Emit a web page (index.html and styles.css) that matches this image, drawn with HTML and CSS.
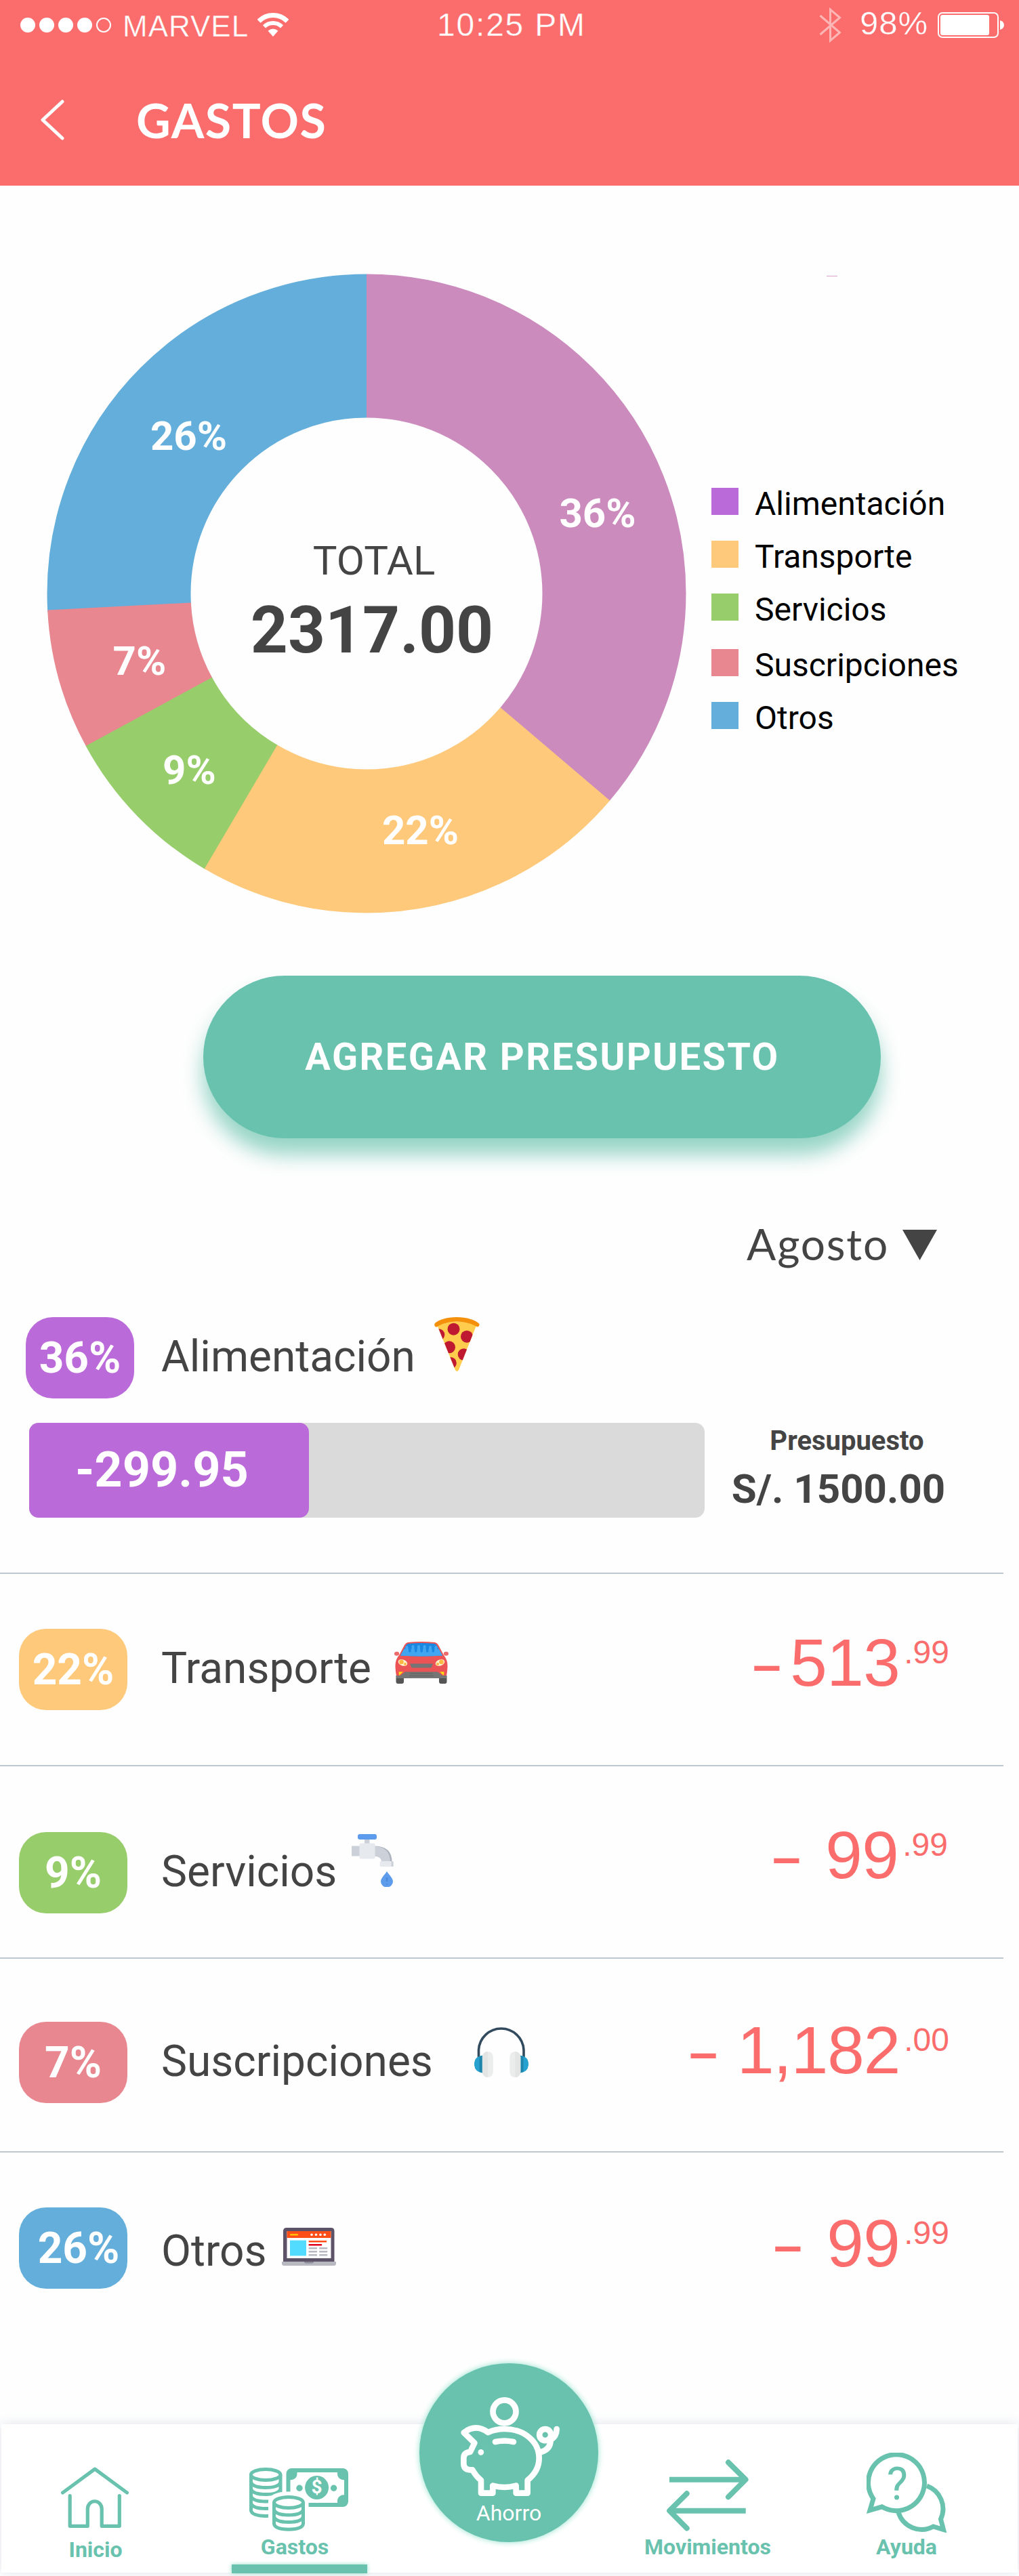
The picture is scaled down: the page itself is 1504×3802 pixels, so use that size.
FILE: index.html
```html
<!DOCTYPE html>
<html lang="es">
<head>
<meta charset="utf-8">
<title>Gastos</title>
<link rel="stylesheet" href="styles.css">
</head>
<body>
<header class="header">
  <div class="status">
    <div class="status-left">
      <span class="dots"><i></i><i></i><i></i><i></i><i class="hollow"></i></span>
      <span class="carrier">MARVEL</span>
      <svg class="wifi" width="46" height="36" viewBox="0 0 46 36">
        <g fill="none" stroke="#fff">
          <path d="M2 13.2A29.5 29.5 0 0 1 44 13.2" stroke-width="7"/>
          <path d="M10 21.4A18.5 18.5 0 0 1 36 21.4" stroke-width="6"/>
        </g>
        <path d="M23 36L15.5 27.5Q23 21.5 30.5 27.5Z" fill="#fff"/>
      </svg>
    </div>
    <span class="clock">10:25 PM</span>
    <div class="status-right">
      <svg class="bluetooth" width="33" height="54" viewBox="0 0 33 54">
        <path d="M1.5 13L30.5 38L16.5 50V4L30.5 16L1.5 41" fill="none" stroke="#fff" stroke-width="3"/>
      </svg>
      <span class="percent">98%</span>
      <svg class="battery" width="98" height="38" viewBox="0 0 98 38">
        <rect x="1" y="1" width="88" height="36" rx="6" fill="none" stroke="#fff" stroke-width="2"/>
        <rect x="4" y="4" width="72" height="30" rx="3" fill="#fff"/>
        <path d="M92 12Q98 14 98 19T92 26Z" fill="#fff"/>
      </svg>
    </div>
  </div>
  <div class="titlebar">
    <svg class="back" width="36" height="60" viewBox="0 0 36 60">
      <path d="M32 3L3 30L32 57" fill="none" stroke="#fff" stroke-width="5" stroke-linecap="round" stroke-linejoin="round"/>
    </svg>
    <h1>GASTOS</h1>
  </div>
</header>

<section class="summary">
  <svg class="donut" width="944" height="944" viewBox="-472 -472 944 944">
    <g fill="none" stroke-width="212" transform="rotate(-90)">
      <circle class="seg-otros" r="365.5" pathLength="360" stroke-dasharray="93.5 360" stroke-dashoffset="-266.7"/>
      <circle class="seg-suscripciones" r="365.5" pathLength="360" stroke-dasharray="25.7 360" stroke-dashoffset="-241.3"/>
      <circle class="seg-servicios" r="365.5" pathLength="360" stroke-dasharray="31.2 360" stroke-dashoffset="-210.3"/>
      <circle class="seg-transporte" r="365.5" pathLength="360" stroke-dasharray="80.2 360" stroke-dashoffset="-130.3"/>
      <circle class="seg-alimentacion" r="365.5" pathLength="360" stroke-dasharray="130.4 360"/>
    </g>
    <g class="share">
      <text x="341" y="-98">36%</text>
      <text x="-262.500" y="-212">26%</text>
      <text x="-335" y="120">7%</text>
      <text x="-261.500" y="281">9%</text>
      <text x="79.500" y="370">22%</text>
    </g>
    <text class="total-label" x="11" y="-28">TOTAL</text>
    <text class="total-value" x="8" y="86.500">2317.00</text>
  </svg>
  <div class="legend-side">
    <span class="tick"></span>
    <ul class="legend">
      <li><i class="bg-alimentacion"></i>Alimentación</li>
      <li><i class="bg-transporte"></i>Transporte</li>
      <li><i class="bg-servicios"></i>Servicios</li>
      <li class="wide-gap"><i class="bg-suscripciones"></i>Suscripciones</li>
      <li><i class="bg-otros"></i>Otros</li>
    </ul>
  </div>
</section>

<button class="add">AGREGAR PRESUPUESTO</button>

<div class="month">
  <span>Agosto</span>
  <svg width="51" height="45" viewBox="0 0 51 45"><path d="M0 0H51L25.500 45Z" fill="#444"/></svg>
</div>

<main class="list">
  <section class="row row-alimentacion">
    <div class="line">
      <span class="pill bg-alimentacion">36%</span>
      <span class="name">Alimentación</span>
      <svg class="icon" width="67" height="80" viewBox="0 0 67 80">
        <clipPath id="slice"><path d="M3.500 10Q33 3 63 10L36 78Q33.500 82 31 78Z"/></clipPath>
        <g clip-path="url(#slice)">
          <rect width="67" height="80" fill="#ffcc4d"/>
          <g fill="#be1931"><circle cx="28.500" cy="17.700" r="9"/><circle cx="48" cy="28.700" r="9"/><circle cx="6.500" cy="26" r="8.800"/><circle cx="22" cy="44.300" r="9"/><circle cx="43.500" cy="55" r="8.800"/><circle cx="24" cy="67.700" r="8.800"/></g>
        </g>
        <path d="M33 0C18 0 6 4 1 9Q-1 12 2 14.500Q4 15 6 13Q17 6.500 33 6.500T61 13Q63 15 65 14Q68 11 65.500 9C60 4 48 0 33 0Z" fill="#f4900c"/>
      </svg>
    </div>
    <div class="budget">
      <div class="track"><div class="fill">-299.95</div></div>
      <div class="limit"><span class="limit-label">Presupuesto</span><span class="limit-value">S/. 1500.00</span></div>
    </div>
  </section>

  <section class="row row-transporte">
    <span class="pill bg-transporte">22%</span>
    <span class="name">Transporte</span>
    <svg class="icon" width="80" height="62" viewBox="0 0 80 62">
      <path d="M2.500 50H14V59Q14 62 11 62H5.500Q2.500 62 2.500 59ZM66 50H77.500V59Q77.500 62 74.500 62H69Q66 62 66 59Z" fill="#555"/>
      <path d="M20 1Q40-1 60 1Q63 1.500 65 5L73 20Q79 27 78.500 37Q78 46 77 50H3Q2 46 1.500 37Q1 27 7 20L15 5Q17 1.500 20 1Z" fill="#ec5355"/>
      <ellipse cx="3.600" cy="17.800" rx="3.600" ry="3" fill="#ec6a6c"/><ellipse cx="76.400" cy="17.800" rx="3.600" ry="3" fill="#ec6a6c"/>
      <path d="M20.500 3Q40 1 59.500 3Q62 3.500 63 6L71 20.500Q40 22.500 9 20.500L17 6Q18 3.500 20.500 3Z" fill="#1a87e0"/>
      <path d="M9 20.500L14 11H66L71 20.500Q40 22.500 9 20.500Z" fill="#42a5f0"/>
      <path d="M18.500 8V14M27.500 7V14M36 7V14M44.500 7V14M53 8V14M61.500 8V14" stroke="#42a5f0" stroke-width="4" stroke-linecap="round"/>
      <path d="M22.800 9V14M31.700 9V14M40.200 9V14M48.700 9V14M57.300 9V14" stroke="#1a87e0" stroke-width="3.500" stroke-linecap="round"/>
      <g fill="#fff3d0"><ellipse cx="12.500" cy="31" rx="7" ry="4.500" transform="rotate(20 12.500 31)"/><ellipse cx="67.500" cy="31" rx="7" ry="4.500" transform="rotate(-20 67.500 31)"/></g>
      <g fill="#ffb744"><circle cx="10.500" cy="30" r="3.300"/><circle cx="16" cy="33" r="2"/><circle cx="69.500" cy="30" r="3.300"/><circle cx="64" cy="33" r="2"/></g>
      <path d="M23 32.500H57L54.500 38.500H25.500Z" fill="#757575"/>
      <path d="M3 54V50L9 50L16 44.500H64L71 50H77V54Z" fill="#757575"/>
      <path d="M23 47H57M22 50.500H58" stroke="#5f5f5f" stroke-width="1"/>
      <path d="M6.500 44.500H13L7 50ZM73.500 44.500H67L73 50Z" fill="#ffe011"/>
    </svg>
    <span class="amount"><b>–</b><span>513</span><sup>.99</sup></span>
  </section>

  <section class="row row-servicios">
    <span class="pill bg-servicios">9%</span>
    <span class="name">Servicios</span>
    <svg class="icon" width="62" height="78" viewBox="0 0 62 78">
      <rect x="19" y="7" width="7.500" height="8" fill="#ccd1d9"/>
      <rect x="9" width="28" height="8" rx="3" fill="#5d9cec"/>
      <rect y="17.500" width="13" height="15" fill="#ccd1d9"/>
      <path d="M34 17.500Q59.500 18 59.500 41H44.500Q44.500 33 34 32.500Z" fill="#aab2bc"/>
      <path d="M34 18Q57 19 57 41H44.500Q44.500 33 34 32.500Z" fill="#ccd1d9"/>
      <rect x="11.500" y="13.500" width="23" height="23" rx="2" fill="#e6e9ed"/>
      <rect x="41.700" y="40" width="20" height="8" rx="1.500" fill="#e6e9ed"/><rect x="58.500" y="40" width="3" height="8" rx="1" fill="#ccd1d9"/>
      <path d="M52 55C48 61 43 65 43 70A9 8.500 0 0 0 61 70C61 65 56 61 52 55Z" fill="#5d9cec"/>
      <path d="M52 64V70M52 73V74.500" stroke="#4a89dc" stroke-width="2.500"/>
    </svg>
    <span class="amount"><b>–</b><span>99</span><sup>.99</sup></span>
  </section>

  <section class="row row-suscripciones">
    <span class="pill bg-suscripciones">7%</span>
    <span class="name">Suscripciones</span>
    <svg class="icon" width="80" height="76" viewBox="0 0 80 76">
      <path d="M6.500 50V35.500A33.300 33.300 0 0 1 73 35.500V50" fill="none" stroke="#324a5e" stroke-width="3.600"/>
      <path d="M12.500 43.700Q0 45 0 56.500T12.500 69.500ZM67.500 43.700Q80 45 80 56.500T67.500 69.500Z" fill="#27a2cf"/>
      <path d="M7.500 45.200L12.500 43.700V69.500L7.500 68ZM72.500 45.200L67.500 43.700V69.500L72.500 68Z" fill="#1e86ac"/>
      <rect x="11.800" y="38" width="16" height="38" rx="8" fill="#ebedec"/><rect x="52.300" y="38" width="16" height="38" rx="8" fill="#ebedec"/>
      <path d="M20 38A8 8 0 0 0 12 46V68A8 8 0 0 0 20 76ZM60.300 38A8 8 0 0 1 68.300 46V68A8 8 0 0 1 60.300 76Z" fill="#e2e5e4"/>
    </svg>
    <span class="amount"><b>–</b><span>1,182</span><sup>.00</sup></span>
  </section>

  <section class="row row-otros">
    <span class="pill bg-otros">26%</span>
    <span class="name">Otros</span>
    <svg class="icon" width="80" height="56" viewBox="0 0 80 56">
      <path d="M7 0H72.500Q77.500 0 77.500 5V51H2V5Q2 0 7 0Z" fill="#5d5369"/>
      <rect x="7.500" y="5" width="65" height="40" fill="#fff"/>
      <rect x="7.500" y="5" width="65" height="10" fill="#ff4f19"/>
      <rect x="12" y="9" width="12" height="2.600" rx="1" fill="#ffc107"/>
      <g fill="#fff"><circle cx="44" cy="10.200" r="1.800"/><circle cx="50.500" cy="10.200" r="1.800"/><circle cx="57" cy="10.200" r="1.800"/><circle cx="63.300" cy="10.200" r="1.800"/></g>
      <rect x="12" y="18.600" width="24" height="22.800" fill="#52dbff"/>
      <rect x="39.600" y="19" width="26.500" height="2.500" fill="#ff4f19"/><rect x="39.600" y="24" width="19.500" height="2.500" fill="#e3001b"/>
      <path d="M39.600 30.300H52M55.200 30.300H67.200M39.600 35.200H52M55.200 35.200H67.200M39.600 40.200H52M55.200 40.200H67.200" stroke="#b8b8c0" stroke-width="2.500"/>
      <path d="M0 50H80V53Q80 56 77 56H3Q0 56 0 53Z" fill="#b8b8c0"/>
      <path d="M33 50H47Q47 52.500 44.500 52.500H35.500Q33 52.500 33 50Z" fill="#8d8a99"/>
    </svg>
    <span class="amount"><b>–</b><span>99</span><sup>.99</sup></span>
  </section>
</main>

<nav class="tabs">
  <a class="tab tab-inicio">
    <svg width="100" height="90" viewBox="0 0 100 90">
      <path d="M2.600 38L50 3.200L97.400 38M13.200 42.500V87.300H39.300V61.800A10.400 11 0 0 1 60.200 61.800V87.300H86.300V42.500" fill="none" stroke="#68c2ad" stroke-width="5.200" stroke-linecap="round" stroke-linejoin="round"/>
    </svg>
    <span>Inicio</span>
  </a>
  <a class="tab tab-gastos">
    <svg width="146" height="94" viewBox="0 0 146 94">
      <rect x="57.500" y="4" width="85.500" height="51" rx="5" fill="none" stroke="#68c2ad" stroke-width="6"/>
      <path d="M57 4H70.500V9.500A9 9 0 0 1 57 17ZM143.500 4H130V9.500A9 9 0 0 0 143.500 17ZM143.500 54.500H130V49A9 9 0 0 1 143.500 41.500Z" fill="#68c2ad"/>
      <circle cx="99.600" cy="29.500" r="17.500" fill="#68c2ad"/><circle cx="74" cy="30.300" r="4.700" fill="#68c2ad"/><circle cx="124.600" cy="30.300" r="4.700" fill="#68c2ad"/>
      <text class="dollar" x="99.600" y="38">$</text>
      <g fill="none" stroke="#68c2ad" stroke-width="5">
        <ellipse cx="24.200" cy="10.500" rx="21.800" ry="8"/>
        <path d="M2.500 10.500V63.500Q4 71 24.200 71.500Q44.500 71 46 63.500V10.500M2.500 21.500Q5 29.500 24.200 29.500T46 21.500M2.500 31.500Q5 39.500 24.200 39.500T46 31.500M2.500 42Q5 50 24.200 50T46 42M2.500 52.500Q5 60.500 24.200 60.500T46 52.500"/>
      </g>
      <path d="M28 50C28 40 42 35.500 58 35.500S87.500 41 87.500 50V94H28Z" fill="#fff"/>
      <g fill="none" stroke="#68c2ad" stroke-width="5">
        <ellipse cx="58" cy="51.500" rx="21.500" ry="8"/>
        <path d="M36.500 51.500V83Q38 91 58 91.300Q78 91 79.500 83V51.500M36.500 62Q39 70 58 70T79.500 62M36.500 72.500Q39 80.500 58 80.500T79.500 72.500"/>
      </g>
    </svg>
    <span>Gastos</span>
    <i class="indicator"></i>
  </a>
  <a class="tab tab-ahorro">
    <svg width="146" height="146" viewBox="360 234 438 438">
      <g fill="none" stroke="#fff" stroke-width="26" stroke-linecap="round" stroke-linejoin="round">
        <circle cx="553.500" cy="298" r="51"/>
        <path d="M481 390Q515 375 553 375C640 375 707 430 707 505C707 545 690 575 656 602V659H605V626Q553 640 502 626V659H450V602Q428 585 412 556H400Q373 554 373 528V505Q373 478 402 477L421 437L374 391Q400 370 427 370Q455 370 481 390Z"/>
        <path d="M513 432Q553 423 594 432"/>
        <circle cx="734" cy="401" r="25.500"/>
        <path d="M716 477Q758 465 758 424Q785 408 785 375"/>
      </g>
      <circle cx="449.500" cy="478" r="13" fill="#fff"/>
    </svg>
    <span>Ahorro</span>
  </a>
  <a class="tab tab-movimientos">
    <svg width="121" height="106" viewBox="0 0 121 106">
      <g fill="none" stroke="#68c2ad" stroke-width="8" stroke-linejoin="round">
        <path d="M4 29.700H116M116.700 75.700H5"/>
        <path d="M91 4.300L116.500 29.700L91 55.300M29.700 50.300L4.200 75.700L29.700 101.500" stroke-linecap="round"/>
      </g>
    </svg>
    <span>Movimientos</span>
  </a>
  <a class="tab tab-ayuda">
    <svg width="118" height="118" viewBox="0 0 118 118">
      <path d="M89 49A36 36 0 0 1 109.500 98L113.500 113.500L98.500 109A36 36 0 0 1 47 88" fill="none" stroke="#68c2ad" stroke-width="7"/>
      <path d="M22.700 79.800A41.500 41.500 0 1 0 10 68L5 85Z" fill="#fff" stroke="#68c2ad" stroke-width="7"/>
      <text class="question" x="45.300" y="69">?</text>
    </svg>
    <span>Ayuda</span>
  </a>
</nav>
</body>
</html>
```
FILE: styles.css
```css
* { box-sizing: border-box; }

body {
  margin: 0;
  width: 1504px;
  height: 3802px;
  overflow: hidden;
  background: #fefefe;
  color: #444;
  font-family: Roboto, "Liberation Sans", sans-serif;
}

svg { display: block; flex: none; }

.bg-alimentacion { background: #bb6bd9; }
.bg-transporte { background: #fec97a; }
.bg-servicios { background: #97cd6b; }
.bg-suscripciones { background: #e88790; }
.bg-otros { background: #63aedb; }

/* Header */
.header {
  height: 274px;
  background: #fb6d6c;
  color: #fff;
}

.status {
  display: grid;
  grid-template-columns: 645px 564px 1fr;
  height: 130px;
  font-family: "Liberation Sans", Arial, sans-serif;
  white-space: nowrap;
  -webkit-text-stroke: 0.4px #fb6d6c;
}

.status-left, .status-right { display: flex; align-items: flex-start; }

.dots { display: flex; gap: 6px; margin: 26px 0 0 30px; }
.dots i { width: 22px; height: 22px; border-radius: 50%; background: #fff; }
.dots .hollow { background: none; border: 2px solid #fff; }

.carrier { width: 199px; margin: 17px 0 0 17px; font-size: 44px; line-height: 44px; letter-spacing: 1px; }
.wifi { margin-top: 18px; }
.clock { margin-top: 13px; font-size: 48px; line-height: 48px; letter-spacing: 1.8px; }
.bluetooth { margin-top: 10px; opacity: .5; }
.percent { width: 115px; margin: 10px 0 0 27px; font-size: 49px; line-height: 48px; letter-spacing: 1px; }
.battery { margin-top: 18px; }

.titlebar { display: flex; align-items: flex-start; padding-left: 60px; }
.back { margin-top: 17px; }
h1 {
  margin: 5px 0 0 105px;
  font: 700 70px/84px Lato, sans-serif;
  letter-spacing: 1.5px;
}

/* Chart */
.summary { display: flex; height: 1166px; padding: 130px 0 0 69px; }
.seg-alimentacion { stroke: #cb8bbd; }
.seg-transporte { stroke: #fec97a; }
.seg-servicios { stroke: #97cd6b; }
.seg-suscripciones { stroke: #e88790; }
.seg-otros { stroke: #63aedb; }
.donut text { text-anchor: middle; }
.share { fill: #fff; font-size: 60px; font-weight: 700; }
.total-label { fill: #444; font-size: 60px; }
.total-value { fill: #444; font-size: 96px; font-weight: 700; }

.legend-side { display: flex; flex-direction: column; margin-left: 37px; }
.tick { width: 16px; height: 1px; margin: 3px 0 0 170px; background: #d9a0c8; }
.legend { display: flex; flex-direction: column; gap: 38px; margin: 312px 0 0; padding: 0; list-style: none; }
.legend li { display: flex; gap: 24px; height: 40px; font-size: 48px; line-height: 48px; color: #000; }
.legend .wide-gap { margin-top: 4px; }
.legend i { width: 40px; height: 40px; }

/* Primary action */
.add {
  display: block;
  width: 1000px;
  height: 240px;
  margin: 0 0 0 300px;
  padding: 0 0 0 1px;
  border: 0;
  border-radius: 120px;
  background: #68c2ad;
  box-shadow: 0 24px 30px rgba(104, 194, 173, .7);
  color: #fff;
  font: 700 56px/236px Roboto, sans-serif;
  letter-spacing: 2.4px;
}

.month {
  display: flex;
  align-items: flex-start;
  justify-content: space-between;
  width: 281px;
  height: 220px;
  margin-left: 1102px;
  padding-top: 116px;
  font: 400 64px/80px Lato, sans-serif;
  letter-spacing: 1.8px;
}
.month svg { margin-top: 19px; }

/* Category list */
.row {
  display: flex;
  align-items: flex-start;
  width: 1481px;
  height: 284px;
  padding: 0 80px 0 28px;
  border-bottom: 2px solid #bdc8d3;
}

.pill {
  flex: none;
  width: 160px;
  height: 120px;
  border-radius: 40px;
  color: #fff;
  font-size: 64px;
  font-weight: 700;
  line-height: 121px;
  text-align: center;
}

.name { flex: none; margin-left: 50px; font-size: 64px; line-height: 82px; }

.amount {
  display: flex;
  align-items: flex-start;
  margin-left: auto;
  color: #fb6d6c;
  font-family: "Liberation Sans", Arial, sans-serif;
  font-size: 98px;
  line-height: 100px;
  letter-spacing: -0.5px;
}
.amount b { margin: 2px 41px 0 0; font-size: 75px; }
.amount sup { margin: 5px 0 0 6px; font-size: 48px; line-height: 60px; letter-spacing: 0; }

.row-alimentacion { display: block; height: 423px; padding: 44px 0 0; }
.line { display: flex; align-items: flex-start; padding-left: 38px; }
.line .name { width: 403px; margin: 18px 0 0 40px; }
.budget { display: flex; margin: 36px 0 0 43px; }
.track { width: 997px; height: 140px; border-radius: 14px; background: #dadada; }
.fill {
  width: 413px;
  height: 140px;
  padding-left: 68px;
  border-radius: 14px;
  background: #bb6bd9;
  color: #fff;
  font-size: 72px;
  font-weight: 700;
  line-height: 139px;
}
.limit { display: flex; flex-direction: column; align-items: center; width: 400px; font-weight: 700; }
.limit-label { margin: 3px 0 0 20px; font-size: 40px; line-height: 48px; }
.limit-value { margin: 11px 0 0 -5px; font-size: 60px; line-height: 72px; }

.row-transporte .pill { margin-top: 81px; }
.row-transporte .name { width: 344px; margin-top: 99px; }
.row-transporte .icon { margin-top: 100px; }
.row-transporte .amount { margin-top: 81px; }
.row-transporte b { margin-right: 14px; }

.row-servicios .pill { margin-top: 97px; }
.row-servicios .name { width: 281px; margin-top: 115px; }
.row-servicios .icon { margin-top: 100px; }
.row-servicios .amount { margin: 81px 2px 0 auto; }
.row-servicios b, .row-otros b { margin-right: 37px; }

.row-suscripciones { height: 286px; }
.row-suscripciones .pill { margin-top: 93px; }
.row-suscripciones .name { width: 462px; margin-top: 111px; }
.row-suscripciones .icon { margin-top: 99px; }
.row-suscripciones .amount { margin-top: 85px; letter-spacing: -1px; }
.row-suscripciones b { margin-right: 30px; }

.row-otros { height: 401px; border: 0; }
.row-otros .pill { margin-top: 81px; padding-left: 16px; }
.row-otros .name { width: 178px; margin-top: 105px; }
.row-otros .icon { margin-top: 111px; }
.row-otros .amount { margin-top: 84px; }

/* Tab bar */
.tabs {
  display: grid;
  grid-template-columns: 278px 324px 294px 293px 294px;
  width: 1500px;
  height: 219px;
  margin-left: 2px;
  background: #fff;
  box-shadow: 0 0 16px #dfe4ea;
}
.tab {
  position: relative;
  display: flex;
  flex-direction: column;
  align-items: center;
  justify-content: flex-end;
  padding-bottom: 18px;
  color: #68c2ad;
  font-size: 32px;
  font-weight: 700;
  line-height: 40px;
}
.tab-inicio { padding-bottom: 14px; }
.tab-inicio svg { margin: 0 2px 12px 0; }
.tab-gastos svg { margin: 0 2px 3px 0; }
.tab-gastos span { margin-right: 14px; }
.indicator {
  position: absolute;
  bottom: -1px;
  left: 62px;
  width: 200px;
  height: 13px;
  background: #68c2ad;
  box-shadow: 0 0 6px #8fe0cb;
}
.dollar { fill: #fff; font-size: 28px; font-weight: 700; text-anchor: middle; }

.tab-ahorro {
  justify-content: flex-start;
  width: 264px;
  height: 264px;
  margin: -90px 0 0 15px;
  padding: 50px 0 0;
  border-radius: 50%;
  background: #68c2ad;
  box-shadow: 0 0 8px #8fe0cb;
  color: #fff;
  font-weight: 400;
}
.tab-ahorro svg { margin: 0 0 5px 4px; }
.tab-movimientos svg { margin-bottom: 3px; }
.tab-ayuda svg { margin-bottom: 1px; }
.question { fill: #68c2ad; font-size: 66px; font-weight: 400; text-anchor: middle; }
```
